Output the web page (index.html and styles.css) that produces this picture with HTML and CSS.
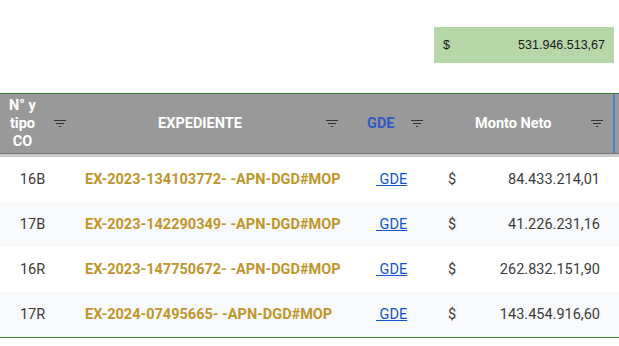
FILE: index.html
```html
<!DOCTYPE html>
<html lang="es">
<head>
<meta charset="utf-8">
<title>Expedientes</title>
<link rel="stylesheet" href="styles.css">
</head>
<body>
<div class="top">
  <div class="total"><span>$</span><span>531.946.513,67</span></div>
</div>
<div class="table">
  <div class="head">
    <div class="h h1"><span class="lbl">N° y tipo CO</span><svg class="flt" width="12" height="7" viewBox="0 0 12 7"><rect x="0" y="0" width="12" height="1"/><rect x="2" y="3" width="8" height="1"/><rect x="5" y="6" width="2" height="1"/></svg></div>
    <div class="h h2"><span class="lbl">EXPEDIENTE</span><svg class="flt" width="12" height="7" viewBox="0 0 12 7"><rect x="0" y="0" width="12" height="1"/><rect x="2" y="3" width="8" height="1"/><rect x="5" y="6" width="2" height="1"/></svg></div>
    <div class="h h3"><span class="lbl">GDE</span><svg class="flt" width="12" height="7" viewBox="0 0 12 7"><rect x="0" y="0" width="12" height="1"/><rect x="2" y="3" width="8" height="1"/><rect x="5" y="6" width="2" height="1"/></svg></div>
    <div class="h h4"><span class="lbl">Monto Neto</span><svg class="flt" width="12" height="7" viewBox="0 0 12 7"><rect x="0" y="0" width="12" height="1"/><rect x="2" y="3" width="8" height="1"/><rect x="5" y="6" width="2" height="1"/></svg></div>
    <div class="h h5"></div>
  </div>
  <div class="band"></div>
  <div class="row">
    <div class="c c1">16B</div>
    <div class="c c2">EX-2023-134103772- -APN-DGD#MOP</div>
    <div class="c c3"><a href="#">&nbsp;GDE</a></div>
    <div class="c c4"><span>$</span><span>84.433.214,01</span></div>
  </div>
  <div class="row alt">
    <div class="c c1">17B</div>
    <div class="c c2">EX-2023-142290349- -APN-DGD#MOP</div>
    <div class="c c3"><a href="#">&nbsp;GDE</a></div>
    <div class="c c4"><span>$</span><span>41.226.231,16</span></div>
  </div>
  <div class="row">
    <div class="c c1">16R</div>
    <div class="c c2">EX-2023-147750672- -APN-DGD#MOP</div>
    <div class="c c3"><a href="#">&nbsp;GDE</a></div>
    <div class="c c4"><span>$</span><span>262.832.151,90</span></div>
  </div>
  <div class="row alt">
    <div class="c c1">17R</div>
    <div class="c c2">EX-2024-07495665- -APN-DGD#MOP</div>
    <div class="c c3"><a href="#">&nbsp;GDE</a></div>
    <div class="c c4"><span>$</span><span>143.454.916,60</span></div>
  </div>
</div>
</body>
</html>
```
FILE: styles.css
```css
* { box-sizing: border-box; }
html, body { margin: 0; padding: 0; background: #fff; }
body { font-family: Roboto, "Noto Sans", sans-serif; width: 619px; overflow: hidden; }

.top {
  height: 93px;
  display: flex;
  justify-content: flex-end;
  align-items: flex-start;
  padding: 27px 5px 0 0;
}
.total {
  width: 180px;
  height: 36px;
  background: #b6d7a8;
  display: flex;
  justify-content: space-between;
  align-items: center;
  padding: 0 9px 0 9px;
  font-family: "Liberation Sans", Arial, sans-serif;
  font-size: 12.5px;
  color: #1a1a1a;
}

.table { width: 619px; }

.head {
  display: grid;
  grid-template-columns: 75px 270px 85px 185px 4px;
  height: 61px;
  background: #999999;
  border-top: 1px solid #3a7d3a;
  border-bottom: 1px solid #777;
}
.h {
  display: flex;
  align-items: center;
  color: #fff;
  font-weight: 700;
  font-size: 14.5px;
  line-height: 18px;
}
.flt { fill: #333; flex: none; }
.h1 .lbl { width: 45px; text-align: center; }
.h1 .flt { margin-left: 9px; }
.h2 .lbl { flex: 1; text-align: center; }
.h2 .flt { margin: 0 7px 0 1px; }
.h3 { padding-left: 22px; }
.h3 .lbl { color: #3358c4; }
.h3 .flt { margin-left: 17px; }
.h4 { padding-left: 45px; border-right: 2px solid #4a7fd4; }
.h4 .flt { margin-left: auto; margin-right: 10px; }

.band { height: 3px; background: #c9c9c9; }

.row {
  display: grid;
  grid-template-columns: 75px 270px 85px 183px 6px;
  height: 45px;
  align-items: center;
  font-size: 14.5px;
  color: #3c3c3c;
  background: #fff;
}
.row.alt { background: #f8f9fa; }
.row:last-child { border-bottom: 1px solid #3a8a3a; height: 46px; }
.c1 { text-align: center; padding-right: 10px; }
.c2 { padding-left: 10px; font-weight: 700; color: #c0962b; white-space: nowrap; }
.c3 { padding-left: 31px; }
.c3 a { color: #1155cc; text-decoration: underline; }
.c4 { display: flex; justify-content: space-between; padding: 0 13px 0 18px; }
```
